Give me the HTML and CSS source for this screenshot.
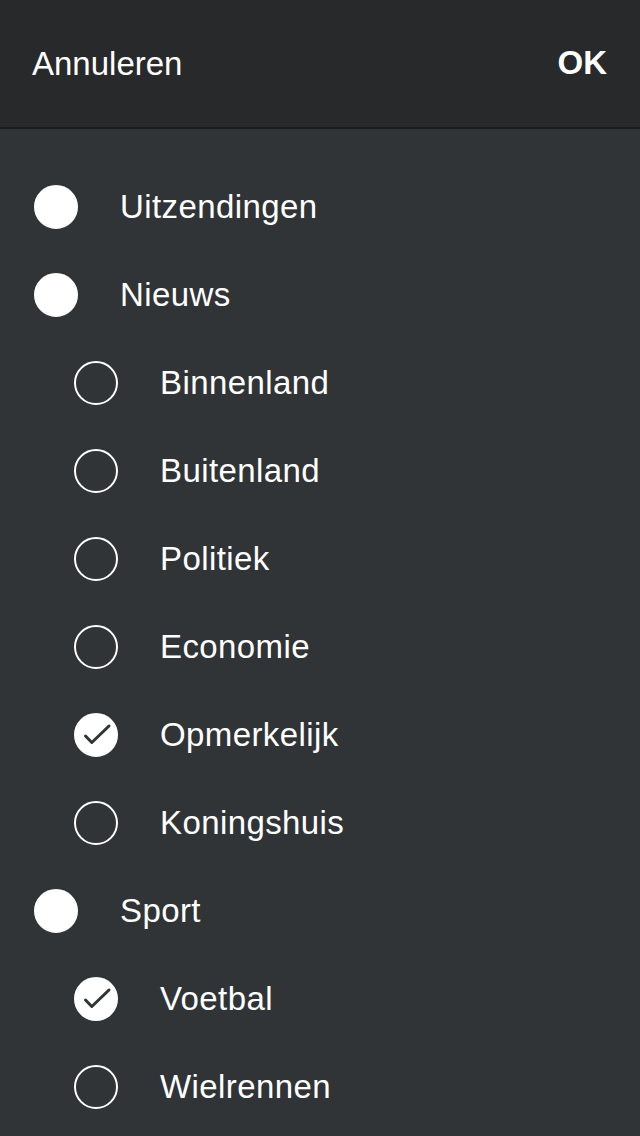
FILE: index.html
```html
<!DOCTYPE html>
<html lang="nl">
  <head>
    <meta charset="UTF-8" />
    <meta name="viewport" content="width=device-width, initial-scale=1.0" />
    <title>Categorieën</title>
    <link rel="stylesheet" href="styles.css">
  </head>
  <body>
    <header class="topbar">
      <span class="topbar-cancel">Annuleren</span>
      <span class="topbar-ok">OK</span>
    </header>

    <ul class="choices">
      <li class="choice"><span class="dot dot-full"></span>Uitzendingen</li>
      <li class="choice"><span class="dot dot-full"></span>Nieuws</li>
      <li class="choice sub"><span class="dot"></span>Binnenland</li>
      <li class="choice sub"><span class="dot"></span>Buitenland</li>
      <li class="choice sub"><span class="dot"></span>Politiek</li>
      <li class="choice sub"><span class="dot"></span>Economie</li>
      <li class="choice sub">
        <span class="dot dot-checked">
          <svg viewBox="0 0 44 44" width="44" height="44"><path d="M11.5 23 L17.8 29.5 L35 13" /></svg>
        </span>Opmerkelijk
      </li>
      <li class="choice sub"><span class="dot"></span>Koningshuis</li>
      <li class="choice"><span class="dot dot-full"></span>Sport</li>
      <li class="choice sub">
        <span class="dot dot-checked">
          <svg viewBox="0 0 44 44" width="44" height="44"><path d="M11.5 23 L17.8 29.5 L35 13" /></svg>
        </span>Voetbal
      </li>
      <li class="choice sub"><span class="dot"></span>Wielrennen</li>
    </ul>
  </body>
</html>
```

FILE: styles.css
```css
html,
body {
  margin: 0;
  padding: 0;
}
body {
  font-family: "Liberation Sans", Arial, sans-serif;
  background-color: #313437;
  color: #ffffff;
  height: 1136px;
  overflow: hidden;
}
.topbar {
  height: 127px;
  background-color: #28292b;
  border-bottom: 2px solid #1b1c1d;
  display: flex;
  align-items: center;
  justify-content: space-between;
  padding: 0 33px 0 32px;
  font-size: 33px;
}
.topbar-cancel {
  margin-top: 1px;
}
.topbar-ok {
  font-weight: bold;
  margin-top: -1px;
}
.choices {
  list-style: none;
  margin: 0;
  padding: 34px 0 0 0;
}
.choice {
  height: 88px;
  display: flex;
  align-items: center;
  padding-left: 34px;
  font-size: 33px;
  letter-spacing: 0.4px;
}
.choice.sub {
  padding-left: 74px;
}
.dot {
  box-sizing: border-box;
  width: 44px;
  height: 44px;
  border-radius: 50%;
  border: 2px solid #ffffff;
  margin-right: 42px;
  flex-shrink: 0;
  position: relative;
}
.dot-full,
.dot-checked {
  background-color: #ffffff;
}
.dot svg {
  position: absolute;
  left: -2px;
  top: -2px;
}
.dot svg path {
  fill: none;
  stroke: #313437;
  stroke-width: 3;
  stroke-linecap: round;
  stroke-linejoin: round;
}
```
